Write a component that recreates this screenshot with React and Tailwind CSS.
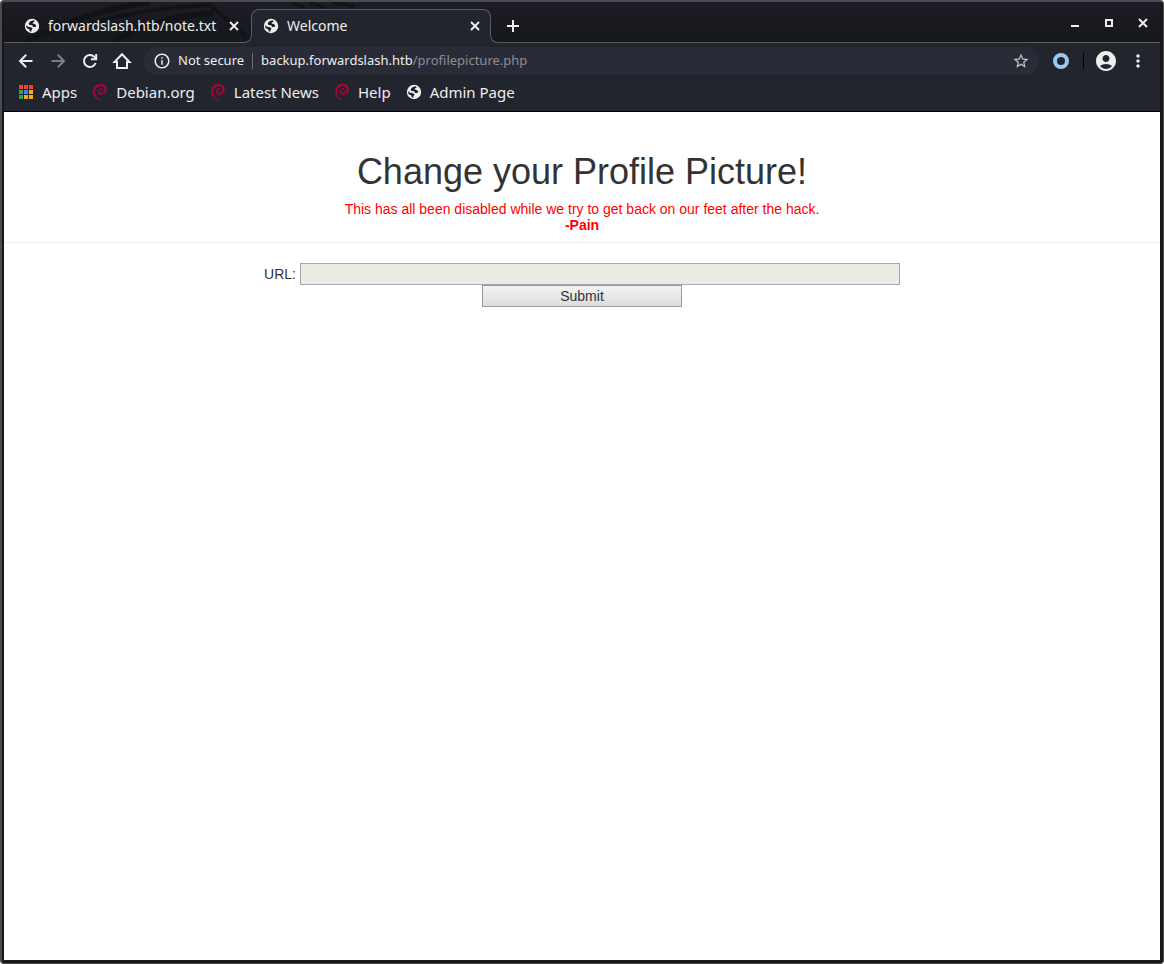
import { MdInfoOutline, MdStarBorder, MdAccountCircle, MdMoreVert } from "react-icons/md";
import { SiDebian } from "react-icons/si";

function Globe() {
  return (
    <svg viewBox="0 0 16 16" className="size-4 shrink-0" aria-hidden="true">
      <circle cx="8" cy="8" r="7.2" fill="#eeeeec" />
      <path d="M9.500 2.200L6.500 3.300L4.600 5.300L5.500 7L8.300 7.300L9 9H11.300L12.400 7.700L10.800 6L8.600 5.600L8.800 4.500L10.800 3.600Z" fill="#1b1c22" />
      <path d="M1.900 7.200L4.500 9L7 9.300L8.600 10.600L7.300 12.200L7.500 13.700L5.700 13.200L5.200 11.300L2.700 10.200Z" fill="#1b1c22" />
    </svg>
  );
}

const glyphs = {
  back: "M16.500 10H4.500M10.200 3.800L4 10L10.200 16.200",
  forward: "M3.500 10H15.500M9.800 3.800L16 10L9.800 16.200",
  reload: "M15.600 12A6 6 0 1 1 14.300 5.800L15.500 7M16.200 3V8.300H10.900",
  home: "M2.500 11H5V17H15V11H17.500L10 3.300Z",
  plus: "M10 4V16M4 10H16",
  close: "M6 6L14 14M14 6L6 14",
};

function Glyph({ name }) {
  return (
    <svg viewBox="0 0 20 20" className="size-5" fill="none" stroke="currentColor" strokeWidth="2" aria-hidden="true">
      <path d={glyphs[name]} />
    </svg>
  );
}

function Corner({ side }) {
  return (
    <div className="relative z-10 size-2 shrink-0 self-end bg-[#23252e]">
      <div className={side === "left" ? "size-full rounded-br-lg border-r border-b border-[#5a5b5d] bg-[#17181c]" : "size-full rounded-bl-lg border-b border-l border-[#5a5b5d] bg-[#17181c]"} />
    </div>
  );
}

function Bookmark({ icon, children }) {
  return (
    <a href="#" className="flex items-center gap-2 whitespace-nowrap">
      {icon}
      {children}
    </a>
  );
}

const swirl = <SiDebian className="size-4 text-[#c4003d]" stroke="currentColor" strokeWidth="0.8" />;
const appColors = ["#ee4035", "#ee4035", "#ee4035", "#34a060", "#2b8af0", "#f9ab10", "#34a060", "#f9ab10", "#f9ab10"];

export default function App() {
  return (
    <div className="flex min-h-screen flex-col rounded-sm border border-t-2 border-l-2 border-[#4b4b4c] bg-[#17171d] pr-[3px] pb-[3px] pl-0.5 font-['Noto_Sans',sans-serif] text-[#eeeeec]">
      <header className="border-b border-black bg-[#23252e]">
        <div className="relative flex h-[41px] overflow-hidden bg-linear-to-b from-[#1c1d25] to-[#17181c]">
          <svg className="absolute top-0 left-0 h-10 w-96" viewBox="0 0 384 40" fill="none" stroke="#121317" aria-hidden="true">
            <path d="M22 39C60 22 95 7 146 0M110 39C140 22 175 13 210 11" strokeWidth="6" />
            <path d="M60 30C110 12 160 5 205 3M203 0L246 38" strokeWidth="4" />
            <path d="M288 0L300 6M306 0L322 6M328 0L350 4" strokeWidth="3" />
          </svg>
          <div className="relative flex w-60 shrink-0 items-center border-b border-[#5a5b5d] pt-2 pl-5 text-sm">
            <Globe />
            <span className="ml-2 w-[178px] whitespace-nowrap">forwardslash.htb/note.txt</span>
            <button aria-label="Close tab" className="relative z-20"><Glyph name="close" /></button>
          </div>
          <Corner side="left" />
          <div className="relative z-0 -mx-px mt-[7px] flex w-60 shrink-0 items-center rounded-t-lg bg-[#23252e] pl-3 text-sm before:absolute before:inset-0 before:bottom-2 before:rounded-t-lg before:border before:border-b-0 before:border-[#5a5b5d]">
            <Globe />
            <span className="ml-2 flex-1">Welcome</span>
            <button aria-label="Close tab" className="relative mr-1.5"><Glyph name="close" /></button>
          </div>
          <Corner side="right" />
          <div className="flex flex-1 items-center border-b border-[#5a5b5d] pt-2 pl-[5px]">
            <button aria-label="New tab"><Glyph name="plus" /></button>
            <div className="mr-[7px] mb-1.5 ml-auto flex items-center gap-4">
              <button aria-label="Minimize" className="flex size-4 items-end justify-center pb-1"><span className="h-0.5 w-2 bg-current" /></button>
              <button aria-label="Maximize" className="ml-0.5 flex size-4 items-center justify-center"><span className="size-2 border-2" /></button>
              <button aria-label="Close window"><Glyph name="close" /></button>
            </div>
          </div>
        </div>
        <div className="flex h-9 items-center pr-3 pl-3">
          <div className="flex gap-3">
            <button aria-label="Back"><Glyph name="back" /></button>
            <button aria-label="Forward" className="text-[#7d7e82]"><Glyph name="forward" /></button>
            <button aria-label="Reload"><Glyph name="reload" /></button>
            <button aria-label="Home"><Glyph name="home" /></button>
          </div>
          <div className="ml-3 flex h-7 flex-1 items-center rounded-full bg-[#292b37] px-[9px] text-[13px]">
            <MdInfoOutline className="size-4.5" />
            <span className="ml-[7px]">Not secure</span>
            <span className="mx-2 h-4 w-px bg-[#6d6e75]" />
            <span>backup.forwardslash.htb<span className="text-[#8c8e94]">/profilepicture.php</span></span>
            <button aria-label="Bookmark this page" className="ml-auto text-[#c8c8c8]"><MdStarBorder className="size-4.5" /></button>
          </div>
          <button aria-label="Extension" className="ml-3.5 size-4 rounded-full border-4 border-[#98c9f0]" />
          <span className="mx-3.5 h-4 w-px bg-black" />
          <button aria-label="Profile" className="-ml-1"><MdAccountCircle className="size-6" /></button>
          <button aria-label="Menu" className="ml-2.5"><MdMoreVert className="size-5" /></button>
        </div>
        <nav className="flex h-8 items-center gap-[15px] px-3.5 pb-1.5 text-[15px]">
          <Bookmark icon={<span className="grid w-4 grid-cols-[repeat(3,4px)] justify-center gap-px">{appColors.map((c, i) => <span key={i} className="size-1" style={{ background: c }} />)}</span>}>Apps</Bookmark>
          <Bookmark icon={swirl}>Debian.org</Bookmark>
          <Bookmark icon={swirl}>Latest News</Bookmark>
          <Bookmark icon={swirl}>Help</Bookmark>
          <Bookmark icon={<Globe />}>Admin Page</Bookmark>
        </nav>
      </header>
      <main className="flex-1 bg-white text-center font-['Liberation_Sans',sans-serif] text-sm text-[#333]">
        <div className="border-b border-[#eee] pt-10 pb-[9px]">
          <h1 className="text-4xl">Change your Profile Picture!</h1>
          <p className="mt-[9px] leading-4 text-[#f00]">This has all been disabled while we try to get back on our feet after the hack.<br /><b>-Pain</b></p>
        </div>
        <form className="flex flex-col items-center pt-5" onSubmit={(e) => e.preventDefault()}>
          <div className="flex items-center gap-1">
            <label htmlFor="url">URL:</label>
            <input id="url" type="text" className="h-[22px] w-[600px] border border-[#a9a9a9] bg-[#ebebe3]" />
          </div>
          <button className="h-[22px] w-[200px] border border-[#999] bg-linear-to-b from-[#f4f4f4] to-[#dcdcdc] leading-5">Submit</button>
        </form>
      </main>
    </div>
  );
}
